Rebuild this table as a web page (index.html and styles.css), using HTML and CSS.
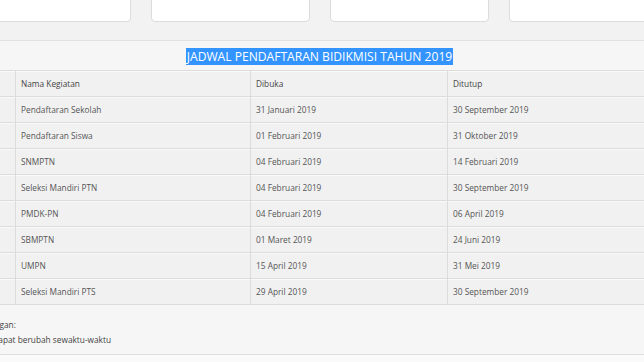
FILE: index.html
```html
<!DOCTYPE html>
<html lang="id">
<head>
<meta charset="utf-8">
<title>Jadwal Pendaftaran Bidikmisi 2019</title>
<link rel="stylesheet" href="styles.css">
</head>
<body>
<div class="page">
  <div class="cards">
    <div class="card"></div>
    <div class="card"></div>
    <div class="card"></div>
    <div class="card card-wide"></div>
  </div>
  <section class="panel">
    <h2 class="title"><span class="sel">JADWAL PENDAFTARAN BIDIKMISI TAHUN 2019</span></h2>
    <table class="schedule">
      <thead>
        <tr><th class="c-no"></th><th class="c-name">Nama Kegiatan</th><th class="c-open">Dibuka</th><th class="c-close">Ditutup</th></tr>
      </thead>
      <tbody>
        <tr><td></td><td>Pendaftaran Sekolah</td><td>31 Januari 2019</td><td>30 September 2019</td></tr>
        <tr><td></td><td>Pendaftaran Siswa</td><td>01 Februari 2019</td><td>31 Oktober 2019</td></tr>
        <tr><td></td><td>SNMPTN</td><td>04 Februari 2019</td><td>14 Februari 2019</td></tr>
        <tr><td></td><td>Seleksi Mandiri PTN</td><td>04 Februari 2019</td><td>30 September 2019</td></tr>
        <tr><td></td><td>PMDK-PN</td><td>04 Februari 2019</td><td>06 April 2019</td></tr>
        <tr><td></td><td>SBMPTN</td><td>01 Maret 2019</td><td>24 Juni 2019</td></tr>
        <tr><td></td><td>UMPN</td><td>15 April 2019</td><td>31 Mei 2019</td></tr>
        <tr><td></td><td>Seleksi Mandiri PTS</td><td>29 April 2019</td><td>30 September 2019</td></tr>
      </tbody>
    </table>
    <div class="note">
      <p>Keterangan:</p>
      <p class="note-2">Jadwal dapat berubah sewaktu-waktu</p>
    </div>
  </section>
  <div class="bottom"></div>
</div>
</body>
</html>
```
FILE: styles.css
```css
html, body {
  margin: 0;
  padding: 0;
}
body {
  background: #f2f2f2;
  overflow: hidden;
  font-family: "Open Sans", "Noto Sans", sans-serif;
  color: #555;
}
.page {
  width: 701px;
  margin-left: -31px;
}
.cards {
  display: flex;
  gap: 20px;
  padding-left: 3px;
  margin-top: -38px;
  height: 60px;
}
.card {
  width: 157px;
  height: 58px;
  background: #fff;
  border: 1px solid #dcdcdc;
  border-radius: 4px;
}
.card-wide {
  flex: 1;
}
.panel {
  margin-top: 18px;
  border-top: 1px solid #e2e2e2;
  background: #f6f6f6;
}
.title {
  margin: 0;
  padding: 6px 0 4px;
  text-align: center;
  font-size: 12.1px;
  font-weight: 400;
  line-height: 19px;
  height: 19px;
}
.sel {
  background: #3394ff;
  color: #fff;
  padding: 0 1px;
}
.schedule {
  width: 100%;
  border-collapse: collapse;
  table-layout: fixed;
  font-size: 8.3px;
  color: #555;
}
.schedule th,
.schedule td {
  height: 25px;
  padding: 0 0 0 5px;
  text-align: left;
  font-weight: 400;
  border-top: 1px solid #dcdcdc;
  border-left: 1px solid #dcdcdc;
  background: #f1f1f1;
  box-shadow: inset 0 1px 0 #fafafa;
}
.schedule th {
  color: #444;
}
.schedule tr > :first-child {
  border-left: none;
}
.schedule tbody tr:last-child td {
  border-bottom: 1px solid #dcdcdc;
}
.c-no { width: 41px; }
.c-name { width: 229px; }
.c-open { width: 191px; }
.note {
  padding: 12px 0 7px;
  font-size: 8.3px;
  color: #444;
  line-height: 15px;
}
.note p {
  margin: 0;
}
.note-2 {
  text-indent: -3px;
}
.bottom {
  border-top: 1px solid #e0e0e0;
  background: #fafafa;
  height: 9px;
}
```
